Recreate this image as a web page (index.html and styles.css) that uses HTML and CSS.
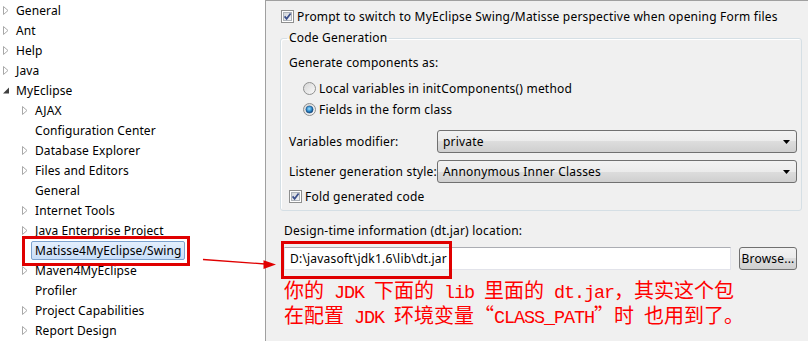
FILE: index.html
```html
<!DOCTYPE html>
<html lang="zh-CN">
<head>
  <meta charset="UTF-8" />
  <title>Preferences - Matisse4MyEclipse/Swing</title>
  <link rel="stylesheet" href="styles.css">
</head>
<body>

  <svg class="defs" aria-hidden="true">
    <defs>
      <linearGradient id="boxFill" x1="0" y1="0" x2="1" y2="1">
        <stop offset="0" stop-color="#cfd3d9" />
        <stop offset="1" stop-color="#f6f6f6" />
      </linearGradient>
      <linearGradient id="radioFill" x1="0" y1="0" x2="1" y2="1">
        <stop offset="0" stop-color="#d4d4d4" />
        <stop offset="1" stop-color="#fbfbfb" />
      </linearGradient>
      <radialGradient id="dotFill" cx="0.45" cy="0.4" r="0.6">
        <stop offset="0" stop-color="#9fe0ff" />
        <stop offset="0.6" stop-color="#2a87c8" />
        <stop offset="1" stop-color="#0e3c6e" />
      </radialGradient>
    </defs>
  </svg>

  <div class="window">
    <ul class="tree">
      <li><svg class="twisty" viewBox="0 0 6 9"><path d="M0.5 0.5L5 4.5L0.5 8.5Z" fill="#fff" stroke="#a8a8a8"/></svg><span>General</span></li>
      <li><svg class="twisty" viewBox="0 0 6 9"><path d="M0.5 0.5L5 4.5L0.5 8.5Z" fill="#fff" stroke="#a8a8a8"/></svg><span>Ant</span></li>
      <li><svg class="twisty" viewBox="0 0 6 9"><path d="M0.5 0.5L5 4.5L0.5 8.5Z" fill="#fff" stroke="#a8a8a8"/></svg><span>Help</span></li>
      <li><svg class="twisty" viewBox="0 0 6 9"><path d="M0.5 0.5L5 4.5L0.5 8.5Z" fill="#fff" stroke="#a8a8a8"/></svg><span>Java</span></li>
      <li><svg class="twisty" viewBox="0 0 6 9"><path d="M6 1.5L6 7.5L0 7.5Z" fill="#404040"/></svg><span>MyEclipse</span></li>
      <li class="sub"><svg class="twisty" viewBox="0 0 6 9"><path d="M0.5 0.5L5 4.5L0.5 8.5Z" fill="#fff" stroke="#a8a8a8"/></svg><span>AJAX</span></li>
      <li class="sub"><span class="twisty"></span><span>Configuration Center</span></li>
      <li class="sub"><svg class="twisty" viewBox="0 0 6 9"><path d="M0.5 0.5L5 4.5L0.5 8.5Z" fill="#fff" stroke="#a8a8a8"/></svg><span>Database Explorer</span></li>
      <li class="sub"><svg class="twisty" viewBox="0 0 6 9"><path d="M0.5 0.5L5 4.5L0.5 8.5Z" fill="#fff" stroke="#a8a8a8"/></svg><span>Files and Editors</span></li>
      <li class="sub"><span class="twisty"></span><span>General</span></li>
      <li class="sub"><svg class="twisty" viewBox="0 0 6 9"><path d="M0.5 0.5L5 4.5L0.5 8.5Z" fill="#fff" stroke="#a8a8a8"/></svg><span>Internet Tools</span></li>
      <li class="sub"><svg class="twisty" viewBox="0 0 6 9"><path d="M0.5 0.5L5 4.5L0.5 8.5Z" fill="#fff" stroke="#a8a8a8"/></svg><span>Java Enterprise Project</span></li>
      <li class="sub"><span class="twisty"></span><span class="selected">Matisse4MyEclipse/Swing</span></li>
      <li class="sub"><svg class="twisty" viewBox="0 0 6 9"><path d="M0.5 0.5L5 4.5L0.5 8.5Z" fill="#fff" stroke="#a8a8a8"/></svg><span>Maven4MyEclipse</span></li>
      <li class="sub"><span class="twisty"></span><span>Profiler</span></li>
      <li class="sub"><svg class="twisty" viewBox="0 0 6 9"><path d="M0.5 0.5L5 4.5L0.5 8.5Z" fill="#fff" stroke="#a8a8a8"/></svg><span>Project Capabilities</span></li>
      <li class="sub"><svg class="twisty" viewBox="0 0 6 9"><path d="M0.5 0.5L5 4.5L0.5 8.5Z" fill="#fff" stroke="#a8a8a8"/></svg><span>Report Design</span></li>
    </ul>

    <div class="pane">
      <div class="check first">
        <svg class="box" viewBox="0 0 13 13"><rect x="0.5" y="0.5" width="12" height="12" fill="#fff" stroke="#8e8f8f"/><rect x="2.5" y="2.5" width="8" height="8" fill="url(#boxFill)" stroke="#aeb3b9"/><path d="M3.6 6.4L5.6 8.8L9.6 3.4" fill="none" stroke="#3b4f8a" stroke-width="1.7"/></svg>
        <span>Prompt to switch to MyEclipse Swing/Matisse perspective when opening Form files</span>
      </div>

      <fieldset class="group">
        <legend>Code Generation</legend>
        <div class="line">Generate components as:</div>
        <div class="radios">
          <div class="radio">
            <svg class="dot" viewBox="0 0 13 13"><circle cx="6.5" cy="6.5" r="6" fill="url(#radioFill)" stroke="#8e8f8f"/></svg>
            <span>Local variables in initComponents() method</span>
          </div>
          <div class="radio">
            <svg class="dot" viewBox="0 0 13 13"><circle cx="6.5" cy="6.5" r="6" fill="url(#radioFill)" stroke="#8e8f8f"/><circle cx="6.5" cy="6.5" r="3.6" fill="url(#dotFill)" stroke="#1b4f86" stroke-width="0.6"/></svg>
            <span>Fields in the form class</span>
          </div>
        </div>
        <div class="combos">
          <span>Variables modifier:</span>
          <div class="combo"><span>private</span><svg class="arrow" viewBox="0 0 7 4"><path d="M0 0H7L3.5 4Z" fill="#000"/></svg></div>
          <span>Listener generation style:</span>
          <div class="combo"><span>Annonymous Inner Classes</span><svg class="arrow" viewBox="0 0 7 4"><path d="M0 0H7L3.5 4Z" fill="#000"/></svg></div>
        </div>
        <div class="check">
          <svg class="box" viewBox="0 0 13 13"><rect x="0.5" y="0.5" width="12" height="12" fill="#fff" stroke="#8e8f8f"/><rect x="2.5" y="2.5" width="8" height="8" fill="url(#boxFill)" stroke="#aeb3b9"/><path d="M3.6 6.4L5.6 8.8L9.6 3.4" fill="none" stroke="#3b4f8a" stroke-width="1.7"/></svg>
          <span>Fold generated code</span>
        </div>
      </fieldset>

      <div class="line design">Design-time information (dt.jar) location:</div>
      <div class="browse-row">
        <div class="field">
          <div class="input">D:\javasoft\jdk1.6\lib\dt.jar</div>
          <span class="mark"></span>
        </div>
        <div class="button">Browse...</div>
      </div>

      <p class="note">你的<span class="en"> JDK </span>下面的<span class="en"> lib </span>里面的<span class="en"> dt.jar</span>，其实这个包<br>在配置<span class="en"> JDK </span>环境变量<span class="q">“</span><span class="en">CLASS_PATH</span><span class="q">”</span>时<span class="en"> </span>也用到了。</p>
    </div>

    <!-- annotation arrow from the tree to the jar field -->
    <svg class="pointer" viewBox="0 0 808 341">
      <path d="M203 259.5L265 264" fill="none" stroke="#e00000" stroke-width="1.3"/>
      <path d="M276 264.6L263.5 260.3L263.5 269Z" fill="#e00000"/>
    </svg>
  </div>

</body>
</html>
```

FILE: styles.css
```css
body {
  margin: 0;
  font-family: "Noto Sans", Arial, sans-serif;
  font-size: 12px;
  color: #000;
  background-color: #fff;
}

.defs {
  display: block;
  width: 0;
  height: 0;
  overflow: hidden;
}

.window {
  position: relative;
  display: flex;
  width: 808px;
  height: 341px;
  overflow: hidden;
}

/* left tree */

.tree {
  flex: none;
  width: 265px;
  margin: 0;
  padding: 0;
  list-style: none;
  background-color: #fff;
}

.tree li {
  display: flex;
  align-items: center;
  height: 20px;
  padding-left: 3px;
  white-space: nowrap;
  letter-spacing: 0.1px;
}

.tree li.sub {
  padding-left: 22px;
}

.twisty {
  flex: none;
  width: 6px;
  height: 9px;
  margin-right: 7px;
}

.tree .selected {
  position: relative;
  margin-left: -4px;
  padding: 0 3px;
  line-height: 17px;
  border: 1px solid #7da2ce;
  border-radius: 2px;
  background: linear-gradient(#e3effd, #c9def9);
}

.tree .selected::after {
  content: "";
  position: absolute;
  left: -10px;
  top: -6px;
  right: -6px;
  bottom: -7px;
  border: 3px solid #e00000;
}

/* right pane */

.pane {
  flex: 1;
  padding: 5px 6px 0 14px;
  background-color: #f0f0f0;
  border-left: 1px solid #a0a0a0;
  border-top: 1px solid #a0a0a0;
  letter-spacing: 0.2px;
}

.check {
  display: flex;
  align-items: center;
  gap: 3px;
  height: 20px;
  white-space: nowrap;
}

.check.first {
  margin-left: 1px;
}

.box,
.dot {
  flex: none;
  width: 13px;
  height: 13px;
}

.group {
  margin: 2px 0 0;
  padding: 5px 4px 4px 8px;
  min-width: 0;
  border: 1px solid #d5dfe5;
  border-radius: 3px;
  box-shadow: inset 1px 1px 0 #fff;
}

.group legend {
  margin-left: -2px;
  padding: 0 2px;
  line-height: 20px;
}

.line {
  height: 20px;
  line-height: 20px;
  white-space: nowrap;
}

.radios {
  margin-top: 5px;
  padding-left: 14px;
}

.radio {
  display: flex;
  align-items: center;
  gap: 3px;
  height: 21px;
  white-space: nowrap;
}

.combos {
  display: grid;
  grid-template-columns: 148px 1fr;
  align-items: center;
  row-gap: 7px;
  margin-top: 10px;
  margin-bottom: 3px;
}

.combo {
  display: flex;
  align-items: center;
  justify-content: space-between;
  height: 23px;
  padding: 0 6px 0 5px;
  box-sizing: border-box;
  border: 1px solid #707070;
  border-radius: 3px;
  background: linear-gradient(#f2f2f2, #ebebeb 50%, #dddddd 50%, #cfcfcf);
}

.arrow {
  width: 7px;
  height: 4px;
}

.design {
  margin-top: 10px;
  margin-left: 4px;
}

.browse-row {
  display: flex;
  gap: 8px;
  margin-top: 6px;
  padding: 0 5px 0 4px;
}

.field {
  position: relative;
  flex: 1;
}

.input {
  height: 23px;
  line-height: 21px;
  padding-left: 5px;
  box-sizing: border-box;
  background-color: #fff;
  border: 1px solid #e2e3ea;
  border-top-color: #abadb3;
  white-space: nowrap;
}

.mark {
  position: absolute;
  left: -3px;
  top: -6px;
  width: 171px;
  height: 38px;
  box-sizing: border-box;
  border: 3px solid #e00000;
}

.button {
  flex: none;
  width: 58px;
  height: 23px;
  line-height: 21px;
  box-sizing: border-box;
  text-align: center;
  border: 1px solid #707070;
  border-radius: 3px;
  background: linear-gradient(#f2f2f2, #ebebeb 50%, #dddddd 50%, #cfcfcf);
}

.note {
  margin: 9px 0 0 4px;
  font-family: "Noto Sans CJK SC", sans-serif;
  font-size: 20px;
  line-height: 21px;
  letter-spacing: 0;
  color: #f00;
  white-space: nowrap;
}

.note .en {
  font-family: "Liberation Mono", monospace;
  font-size: 18.5px;
  letter-spacing: -1.1px;
  white-space: pre;
}

.note .q {
  font-feature-settings: "fwid" 1;
}

.pointer {
  position: absolute;
  left: 0;
  top: 0;
  width: 808px;
  height: 341px;
  pointer-events: none;
}
```
